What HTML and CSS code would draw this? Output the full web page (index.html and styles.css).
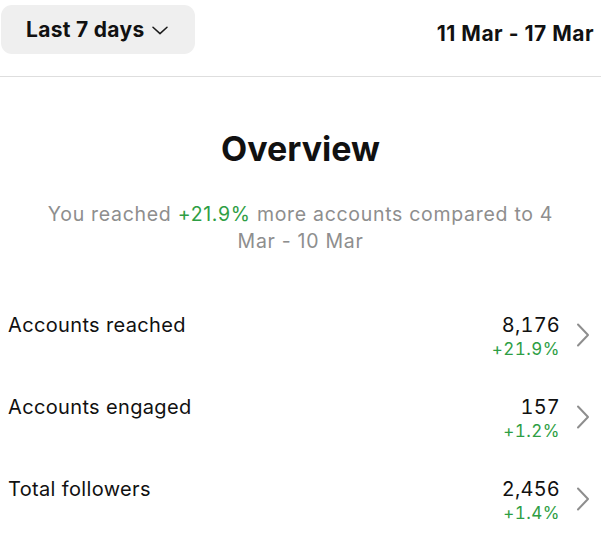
FILE: index.html
```html
<!DOCTYPE html>
<html lang="en">
<head>
<meta charset="utf-8">
<link rel="stylesheet" href="styles.css">
</head>
<body>
<div class="page">
  <header class="topbar">
    <button class="range-btn">
      <span>Last 7 days</span>
      <svg class="down" width="16" height="9" viewBox="0 0 16 9"><path d="M1 1.2 L8 7.6 L15 1.2" fill="none" stroke="#1a1a1a" stroke-width="1.5" stroke-linecap="round" stroke-linejoin="round"/></svg>
    </button>
    <div class="dates">11 Mar - 17 Mar</div>
  </header>

  <section class="overview">
    <h1 class="title">Overview</h1>
    <p class="summary">You reached <span class="up">+21.9%</span> more accounts compared to 4 Mar - 10 Mar</p>
  </section>

  <ul class="stats">
    <li class="stat">
      <span class="label">Accounts reached</span>
      <span class="nums"><span class="value">8,176</span><span class="delta">+21.9%</span></span>
      <svg class="chev" width="14" height="24" viewBox="0 0 14 24"><path d="M2 1.5 L12 12 L2 22.5" fill="none" stroke="#8e8e8e" stroke-width="2" stroke-linecap="round" stroke-linejoin="round"/></svg>
    </li>
    <li class="stat">
      <span class="label">Accounts engaged</span>
      <span class="nums"><span class="value">157</span><span class="delta">+1.2%</span></span>
      <svg class="chev" width="14" height="24" viewBox="0 0 14 24"><path d="M2 1.5 L12 12 L2 22.5" fill="none" stroke="#8e8e8e" stroke-width="2" stroke-linecap="round" stroke-linejoin="round"/></svg>
    </li>
    <li class="stat">
      <span class="label">Total followers</span>
      <span class="nums"><span class="value">2,456</span><span class="delta">+1.4%</span></span>
      <svg class="chev" width="14" height="24" viewBox="0 0 14 24"><path d="M2 1.5 L12 12 L2 22.5" fill="none" stroke="#8e8e8e" stroke-width="2" stroke-linecap="round" stroke-linejoin="round"/></svg>
    </li>
  </ul>
</div>
</body>
</html>
```
FILE: styles.css
```css
* { box-sizing: border-box; }
html, body { margin: 0; padding: 0; background: #fff; }
body {
  font-family: Inter, "Liberation Sans", Arial, sans-serif;
  color: #111;
}
.page { width: 601px; }

.topbar {
  display: flex;
  justify-content: space-between;
  align-items: flex-start;
  height: 77px;
  border-bottom: 1px solid #dedede;
  padding-top: 5px;
  padding-right: 7px;
}
.range-btn {
  display: flex;
  align-items: center;
  gap: 8px;
  width: 194px;
  height: 49px;
  margin-left: 1px;
  padding: 0 0 0 25px;
  border: none;
  border-radius: 11px;
  background: #efefef;
  font-family: inherit;
  font-weight: 700;
  font-size: 21px;
  letter-spacing: 0.3px;
  color: #111;
}
.range-btn .down { margin-top: 2px; }
.dates {
  font-weight: 700;
  font-size: 21px;
  letter-spacing: 0.5px;
  margin-top: 16px;
}

.overview {
  text-align: center;
  padding: 50px 30px 0;
}
.title {
  margin: 0;
  font-size: 34px;
  font-weight: 700;
  line-height: 44px;
}
.summary {
  margin: 30px 0 0;
  font-size: 19.5px;
  letter-spacing: 0.7px;
  line-height: 27px;
  color: #8e8e8e;
}
.up { color: #2e9e44; }

.stats {
  list-style: none;
  margin: 58px 0 0;
  padding: 0 11px 0 8px;
}
.stat {
  display: flex;
  align-items: flex-start;
  height: 82px;
}
.label {
  flex: 1;
  font-size: 20px;
  letter-spacing: 0.35px;
  line-height: 24px;
}
.nums {
  display: flex;
  flex-direction: column;
  align-items: flex-end;
  font-variant-numeric: tabular-nums;
  margin-right: 2px;
}
.value {
  font-size: 20px;
  letter-spacing: 0.2px;
  line-height: 25px;
}
.delta {
  font-size: 17px;
  letter-spacing: 0.5px;
  line-height: 22px;
  color: #2e9e44;
}
.chev { margin: 10px 0 0 14px; }
```
